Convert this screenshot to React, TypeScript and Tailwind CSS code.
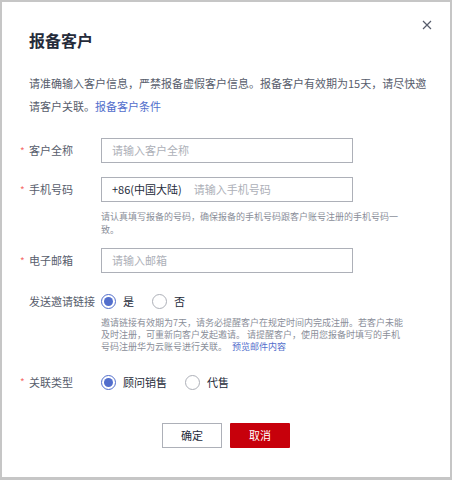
import React from "react";

const font = { fontFamily: '"Noto Sans CJK SC", "Noto Sans", sans-serif' };

function Star() {
  return <span className="-ml-[9px] w-[9px] text-[10px] leading-[10px] text-[#f66f6a]">*</span>;
}

function Radio({ checked }: { checked?: boolean }) {
  return (
    <span
      className={
        "flex h-[15px] w-[15px] shrink-0 items-center justify-center rounded-full border bg-white " +
        (checked ? "border-[#526ecc]" : "border-[#adb0b8]")
      }
    >
      {checked && <span className="h-[9px] w-[9px] rounded-full bg-[#526ecc]" />}
    </span>
  );
}

function RadioGroup({ options, value }: { options: string[]; value: string }) {
  return (
    <div className="flex items-center gap-[18px]">
      {options.map((o) => (
        <label key={o} className="flex items-center gap-[7px] text-[11px] text-[#252b3a]">
          <Radio checked={o === value} />
          {o}
        </label>
      ))}
    </div>
  );
}

function Label({ text, required }: { text: string; required?: boolean }) {
  return (
    <div className="flex w-[72px] shrink-0 items-center text-[11px] text-[#575d6c]">
      {required && <Star />}
      <span>{text}</span>
    </div>
  );
}

export default function App() {
  return (
    <div className="h-[480px] w-[452px] bg-[#c6c6c6] px-[2px] pb-[3px] pt-[2px]" style={font}>
      <div className="relative h-full bg-white pl-[27px]">
        <button className="absolute right-[18px] top-[18px] text-[#575d6c]">
          <svg width="10" height="10" viewBox="0 0 10 10">
            <path d="M1 1L9 9M9 1L1 9" stroke="currentColor" strokeWidth="1.2" fill="none" />
          </svg>
        </button>

        <div className="pt-[26px] text-[16px] font-semibold leading-[24px] text-[#252b3a]">报备客户</div>

        <div className="mt-[20px] w-[402px] text-[11px] leading-[23px] text-[#575d6c]">
          <div>请准确输入客户信息，严禁报备虚假客户信息。报备客户有效期为15天，请尽快邀</div>
          <div>
            请客户关联。<span className="text-[#526ecc]">报备客户条件</span>
          </div>
        </div>

        <div className="mt-[20px] flex items-center">
          <Label text="客户全称" required />
          <div className="flex h-[25px] w-[252px] items-center border border-[#adb0b8] px-[10px] text-[11px] text-[#adb0b8]">
            请输入客户全称
          </div>
        </div>

        <div className="mt-[14px] flex items-center">
          <Label text="手机号码" required />
          <div className="flex h-[25px] w-[252px] items-center gap-[12px] border border-[#adb0b8] px-[10px] text-[11px]">
            <span className="text-[#252b3a]">+86(中国大陆)</span>
            <span className="text-[#adb0b8]">请输入手机号码</span>
          </div>
        </div>
        <p className="ml-[72px] mt-[9px] w-[300px] text-[9px] leading-[12.5px] text-[#8a8e99]">
          请认真填写报备的号码，确保报备的手机号码跟客户账号注册的手机号码一致。
        </p>

        <div className="mt-[12px] flex items-center">
          <Label text="电子邮箱" required />
          <div className="flex h-[25px] w-[252px] items-center border border-[#adb0b8] px-[10px] text-[11px] text-[#adb0b8]">
            请输入邮箱
          </div>
        </div>

        <div className="mt-[20px] flex h-[16px] items-center">
          <Label text="发送邀请链接" />
          <RadioGroup options={["是", "否"]} value="是" />
        </div>
        <div className="ml-[72px] mt-[8px] w-[304px] text-[9px] leading-[12px] text-[#8a8e99]">
          <div>邀请链接有效期为7天，请务必提醒客户在规定时间内完成注册。若客户未能</div>
          <div>及时注册，可重新向客户发起邀请。 请提醒客户，使用您报备时填写的手机</div>
          <div>
            号码注册华为云账号进行关联。 <span className="ml-[3px] text-[#526ecc]">预览邮件内容</span>
          </div>
        </div>

        <div className="mt-[21px] flex h-[16px] items-center">
          <Label text="关联类型" required />
          <RadioGroup options={["顾问销售", "代售"]} value="顾问销售" />
        </div>

        <div className="-ml-[27px] mt-[33px] flex justify-center gap-[8px]">
          <button className="h-[25px] w-[60px] border border-[#adb0b8] bg-white text-[11px] text-[#252b3a]">
            确定
          </button>
          <button className="h-[25px] w-[60px] rounded-[1px] bg-[#c7000b] text-[11px] text-white">取消</button>
        </div>
      </div>
    </div>
  );
}
